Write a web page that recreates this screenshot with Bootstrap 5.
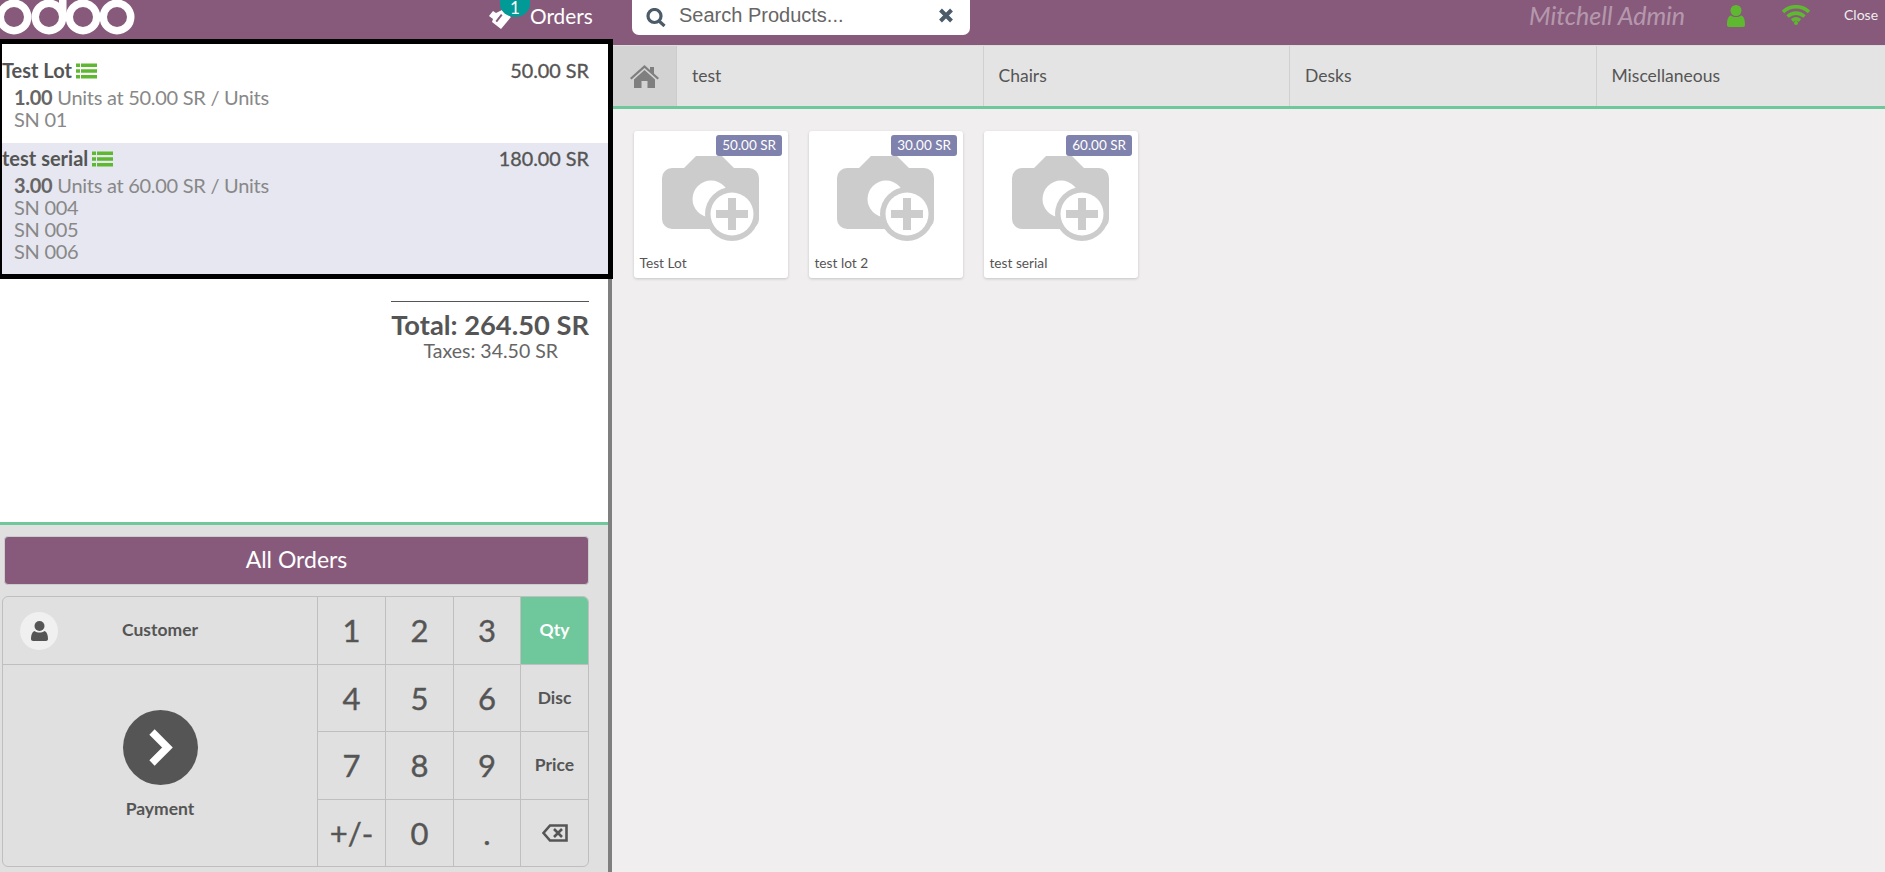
<!DOCTYPE html>
<html lang="en">
<head>
<meta charset="utf-8">
<title>Point of Sale</title>
<link href="https://cdn.jsdelivr.net/npm/bootstrap@5.3.0/dist/css/bootstrap.min.css" rel="stylesheet">
<style>
html,body{height:872px;overflow:hidden}
body{font-family:Lato,"Liberation Sans",sans-serif;color:#555;background:#f0eeee}
.pos-head{height:45px;background:#875a7b;position:relative}
.pos-logo{display:block;width:136px;height:36px}
.orders-tab{position:absolute;left:487px;top:0;height:35px;color:#fff;font-size:20.800px;line-height:31px}
.orders-tab .ticket{width:26px;height:26px;margin-top:5px}
.tab-count{position:absolute;left:13px;top:0;width:30px;height:17px;border-radius:0 0 15px 15px/0 0 13px 13px;background:#019a97;color:#fff;font-size:17px;line-height:16px;text-align:center}
.orders-word{margin-left:17px}
.search-box{position:absolute;left:632px;top:0;width:338px;height:35px;background:#fff;border-radius:0 0 7px 7px;padding:0 17px 0 14px}
.search-word{font-family:"Liberation Sans",sans-serif;font-size:20px;color:#666;margin-left:13px;line-height:30px}
.cashier{position:absolute;left:1529px;top:0;font-size:25px;line-height:31px;font-style:italic;color:rgba(255,255,255,.4)}
.head-user{position:absolute;left:1727px;top:5px}
.head-wifi{position:absolute;left:1782px;top:5px}
.head-close{position:absolute;left:1844px;top:6px;color:#eee;font-size:14px;line-height:18px}
.pos-body{height:827px}
.left-pane{width:612px;height:827px;flex:none;background:#fff;border-right:4px solid #7f7f7f;position:relative}
.order-frame{width:613px;height:240px;margin-top:-6px;border:5px solid #000;border-left-width:2px;background:#fff;position:relative;z-index:2;flex:none}
.line-one{height:99px;padding:15px 19px 0 0}
.line-two{height:131px;padding:4px 19px 0 0;background:#e6e7f0}
.line-main{font-size:20px;line-height:22px;color:#555}
.line-name{font-weight:700;font-size:20px}
.line-price{font-size:19.800px;-webkit-text-stroke:.35px #555}
.line-info{margin-top:5px;padding-left:12px;font-size:20px;line-height:22px;color:#888;letter-spacing:-.28px}
.line-info b{color:#666;font-weight:700}
.green-list{margin-left:4px;vertical-align:-1px}
.totals-box{height:243px;padding:22px 19px 0 0;flex:none;width:608px}
.total-inner{width:198px;border-top:1px solid #555;margin-left:auto;text-align:right}
.total-big{font-size:27.300px;line-height:30px;font-weight:700;color:#555;margin-top:8px;white-space:nowrap;margin-left:-30px}
.total-tax{font-size:19.500px;line-height:22px;color:#666;padding-right:31px;white-space:nowrap}
.control-area{width:608px;flex:1;background:#e0e0e0;border-top:3px solid #6ec89b;padding:11px 0 0 2px}
.all-orders{display:block;width:585px;height:49px;margin-left:2px;background:#875a7b;color:#fff;font-size:23px;line-height:45px;text-align:center;border:1px solid #ccc;border-radius:4px}
.keypad{display:grid;grid-template-columns:314px 68px 68px 67px 68px;grid-template-rows:67px 67px 68px 67px;width:587px;height:271px;margin-top:11px;border:1px solid #bfbfbf;border-radius:6px;overflow:hidden}
.key{display:flex;align-items:center;justify-content:center;border-left:1px solid #bfbfbf;border-top:1px solid #bfbfbf;font-size:31px;color:#555;-webkit-text-stroke:.4px #555}
.key-top{border-top:0}
.key-word{font-size:17.500px;font-weight:700;-webkit-text-stroke:0}
.key-qty{background:#6ec89b;color:#fff}
.cust-key{grid-column:1;grid-row:1;border:0;position:relative;font-size:17.500px;font-weight:700;-webkit-text-stroke:0}
.cust-disc{position:absolute;left:17px;top:15px;width:38px;height:38px;border-radius:50%;background:#f0f0f0}
.pay-key{grid-column:1;grid-row:2/5;border-left:0;flex-direction:column;font-size:17.500px;font-weight:700;-webkit-text-stroke:0}
.pay-disc{width:75px;height:75px;border-radius:50%;background:#555;margin-bottom:11px;margin-top:1px}
.right-pane{height:827px;background:#f0eeee;overflow:hidden}
.cat-bar{height:64px;background:#e4e4e4;border-bottom:3px solid #6ec89b;border-top:1px solid #ddd}
.home-cell{width:65px;background:#d3d3d3;border-right:1px solid #ccc;flex:none}
.cat-cell{width:306.500px;flex:none;border-right:1px solid #d0d0d0;padding-left:15px;font-size:17.500px;line-height:59px;color:#555}
.goods{padding-top:22px;padding-left:22px;gap:21px}
.good{width:154px;height:147px;background:#fff;border-radius:3px;box-shadow:0 1px 3px rgba(0,0,0,.18);position:relative;flex:none}
.good-price{position:absolute;right:6px;top:4px;height:21px;padding:0 6px;background:#7f82ac;color:#fff;font-size:13.500px;line-height:21px;border-radius:3px;white-space:nowrap}
.good-pic{position:absolute;left:27.500px;top:25px}
.good-name{position:absolute;left:5.500px;top:124px;font-size:13.700px;line-height:16px;color:#555}
</style>
</head>
<body>
<svg width="0" height="0" class="position-absolute">
<defs>
<symbol id="cam" viewBox="0 0 97 86">
<path fill="#ccc" d="M34 0h26l12 12h15a10 10 0 0 1 10 10v41a10 10 0 0 1-10 10H10A10 10 0 0 1 0 63V22a10 10 0 0 1 10-10h12z"/>
<circle cx="49" cy="43" r="18.500" fill="#fff"/>
<circle cx="70" cy="58" r="27" fill="#ccc"/>
<circle cx="70" cy="58" r="21.500" fill="#fff"/>
<path fill="#ccc" d="M66 42h8v12h12v8H74v12h-8V62H54v-8h12z"/>
</symbol>
<symbol id="lst" viewBox="0 0 21 16">
<path fill="#5eb930" d="M0 .500h4v3.500H0zM5 .500h16v3.500H5zM0 6.300h4v3.500H0zM5 6.300h16v3.500H5zM0 12.100h4v3.500H0zM5 12.100h16v3.500H5z"/>
</symbol>
</defs>
</svg>

<header class="pos-head">
<svg class="pos-logo" viewBox="0 0 136 36" fill="none" stroke="#fff" stroke-width="7.500">
<circle cx="14" cy="17" r="13.750"/>
<circle cx="49" cy="17" r="13.750"/>
<path d="M62.750 -2V17"/>
<circle cx="83" cy="17" r="13.750"/>
<circle cx="117" cy="17" r="13.750"/>
</svg>
<div class="orders-tab d-flex">
<svg class="ticket" viewBox="0 0 26 26"><path fill="#fff" d="M15 5l9 7-10 12-9-7 1-3-4-3 4-5 3 2z"/><path fill="#875a7b" d="M14 9l1.500 1.200-5.500 7-1.500-1.200z"/></svg>
<span class="tab-count">1</span>
<span class="orders-word">Orders</span>
</div>
<div class="search-box d-flex align-items-start">
<svg class="mt-2" width="20" height="19" viewBox="0 0 20 19" fill="none" stroke="#4b5b68" stroke-width="3.200"><circle cx="8.500" cy="8" r="6.500"/><path d="M13 13l5.500 5"/></svg>
<span class="search-word flex-grow-1">Search Products...</span>
<svg class="mt-2" width="14" height="15" viewBox="0 0 14 15" fill="none" stroke="#4b5b68" stroke-width="4"><path d="M1.500 2l11 11M12.500 2l-11 11"/></svg>
</div>
<span class="cashier">Mitchell Admin</span>
<svg class="head-user" width="18" height="22" viewBox="0 0 18 22"><circle cx="9" cy="5.500" r="5.500" fill="#5eb930"/><path fill="#5eb930" d="M0 20c0-5 1-9 4-9.500 3 2 7 2 10 0 3 .5 4 4.500 4 9.500 0 1-1 2-2 2H2c-1 0-2-1-2-2z"/></svg>
<svg class="head-wifi" width="28" height="20" viewBox="0 0 28 20" fill="none" stroke="#5eb930" stroke-width="3.600"><path d="M1 7c7-7 19-7 26 0M5.500 11.500c5-4.500 12-4.500 17 0M10 15.500c2.500-2 5.500-2 8 0"/><circle cx="14" cy="18" r="2" fill="#5eb930" stroke="none"/></svg>
<span class="head-close">Close</span>
</header>

<main class="pos-body d-flex">
<section class="left-pane d-flex flex-column">
<div class="order-frame">
<div class="line-one">
<div class="line-main d-flex justify-content-between"><span class="line-name">Test Lot<svg class="green-list" width="21" height="16"><use href="#lst"/></svg></span><span class="line-price">50.00 SR</span></div>
<div class="line-info"><b>1.00</b> Units at 50.00 SR / Units<br>SN 01</div>
</div>
<div class="line-two">
<div class="line-main d-flex justify-content-between"><span class="line-name">test serial<svg class="green-list" width="21" height="16"><use href="#lst"/></svg></span><span class="line-price">180.00 SR</span></div>
<div class="line-info"><b>3.00</b> Units at 60.00 SR / Units<br>SN 004<br>SN 005<br>SN 006</div>
</div>
</div>
<div class="totals-box">
<div class="total-inner">
<div class="total-big">Total: 264.50 SR</div>
<div class="total-tax">Taxes: 34.50 SR</div>
</div>
</div>
<div class="control-area">
<div class="all-orders">All Orders</div>
<div class="keypad">
<div class="key cust-key"><span class="cust-disc d-flex align-items-center justify-content-center"><svg width="17" height="20" viewBox="0 0 17 20"><circle cx="8.500" cy="5" r="5" fill="#555"/><path fill="#555" d="M0 18c0-4 1-7 3.500-8 3 2 7 2 10 0 2.500 1 3.500 4 3.500 8 0 1-1 2-2 2H2c-1 0-2-1-2-2z"/></svg></span>Customer</div>
<div class="key key-top">1</div><div class="key key-top">2</div><div class="key key-top">3</div><div class="key key-top key-word key-qty">Qty</div>
<div class="key pay-key"><span class="pay-disc d-flex align-items-center justify-content-center"><svg width="25" height="39" viewBox="0 0 25 39" fill="none" stroke="#fff" stroke-width="7.500"><path d="M4 4l15.500 15.500-15.500 15.500"/></svg></span>Payment</div>
<div class="key">4</div><div class="key">5</div><div class="key">6</div><div class="key key-word">Disc</div>
<div class="key">7</div><div class="key">8</div><div class="key">9</div><div class="key key-word">Price</div>
<div class="key">+/-</div><div class="key">0</div><div class="key">.</div>
<div class="key"><svg width="26" height="18" viewBox="0 0 26 18" fill="none" stroke="#555" stroke-width="2.600"><path d="M8 1.500h16.500v15H8L1.500 9zM12 5l8 8M20 5l-8 8"/></svg></div>
</div>
</div>
</section>

<section class="right-pane flex-grow-1">
<nav class="cat-bar d-flex">
<div class="home-cell d-flex align-items-center justify-content-center"><svg width="29" height="23" viewBox="0 0 29 23"><path fill="#7f7f7f" d="M14.500 0L20 5V2h4v6.500l5 4.500-1.500 1.500L14.500 3 1.500 14.500 0 13z"/><path fill="#7f7f7f" d="M14.500 5L25 14.500V23h-7.500v-7h-6v7H4v-8.500z"/></svg></div>
<div class="cat-cell">test</div>
<div class="cat-cell">Chairs</div>
<div class="cat-cell">Desks</div>
<div class="cat-cell border-0">Miscellaneous</div>
</nav>
<div class="goods d-flex">
<div class="good"><span class="good-price">50.00 SR</span><svg class="good-pic" width="97" height="86"><use href="#cam"/></svg><span class="good-name">Test Lot</span></div>
<div class="good"><span class="good-price">30.00 SR</span><svg class="good-pic" width="97" height="86"><use href="#cam"/></svg><span class="good-name">test lot 2</span></div>
<div class="good"><span class="good-price">60.00 SR</span><svg class="good-pic" width="97" height="86"><use href="#cam"/></svg><span class="good-name">test serial</span></div>
</div>
</section>
</main>
</body>
</html>
